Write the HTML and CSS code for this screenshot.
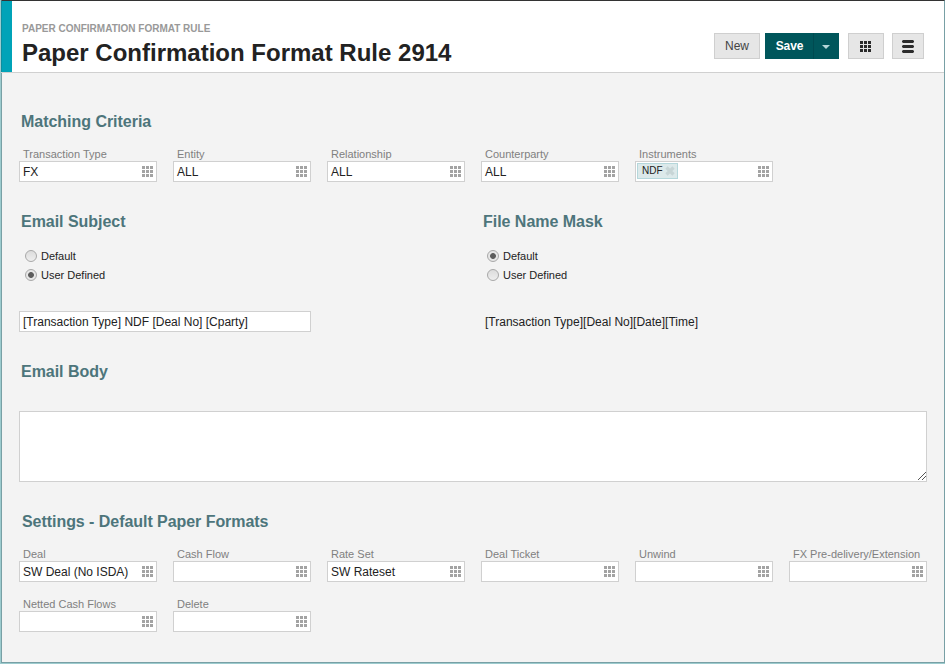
FILE: index.html
```
<!DOCTYPE html>
<html lang="en">
<head>
<meta charset="utf-8">
<title>Paper Confirmation Format Rule 2914</title>
<link rel="stylesheet" href="styles.css">
</head>
<body>
<svg width="0" height="0" class="defs">
  <symbol id="grid" viewBox="0 0 11 11"><path d="M0 0h3v3H0zM4 0h3v3H4zM8 0h3v3H8zM0 4h3v3H0zM4 4h3v3H4zM8 4h3v3H8zM0 8h3v3H0zM4 8h3v3H4zM8 8h3v3H8z"/></symbol>
</svg>
<div class="window">
  <header class="header">
    <div class="accent"></div>
    <div class="titles">
      <div class="crumb">PAPER CONFIRMATION FORMAT RULE</div>
      <h1>Paper Confirmation Format Rule 2914</h1>
    </div>
    <div class="actions">
      <button class="btn new">New</button>
      <div class="split"><button class="save">Save</button><button class="caret" aria-label="More"><svg width="8" height="4"><path d="M0 0h8L4 4z"/></svg></button></div>
      <button class="btn apps" aria-label="Apps"><svg width="11" height="11"><use href="#grid"/></svg></button>
      <button class="btn menu" aria-label="Menu"><svg width="12" height="13"><path d="M1 0h10l1 1v1l-1 1H1L0 2V1zM1 5h10l1 1v1l-1 1H1L0 7V6zM1 10h10l1 1v1l-1 1H1l-1-1v-1z"/></svg></button>
    </div>
  </header>
  <main>
    <section class="criteria">
      <h2>Matching Criteria</h2>
      <div class="fields">
        <div class="field"><label><span class="l1">Transaction Type</span></label><div class="box"><span>FX</span><svg><use href="#grid"/></svg></div></div>
        <div class="field"><label><span>Entity</span></label><div class="box"><span>ALL</span><svg><use href="#grid"/></svg></div></div>
        <div class="field"><label><span>Relationship</span></label><div class="box"><span>ALL</span><svg><use href="#grid"/></svg></div></div>
        <div class="field"><label><span>Counterparty</span></label><div class="box"><span>ALL</span><svg><use href="#grid"/></svg></div></div>
        <div class="field"><label><span>Instruments</span></label><div class="box tags"><span class="tag">NDF<svg class="x" viewBox="0 0 10 10"><path d="M1.5 1.5l7 7M8.5 1.5l-7 7"/></svg></span><svg><use href="#grid"/></svg></div></div>
      </div>
    </section>
    <div class="columns">
      <section>
        <h2>Email Subject</h2>
        <div class="radio"><i></i><span>Default</span></div>
        <div class="radio"><i class="on"></i><span>User Defined</span></div>
        <div class="box mask"><span>[Transaction Type] NDF [Deal No] [Cparty]</span></div>
      </section>
      <section>
        <h2>File Name Mask</h2>
        <div class="radio"><i class="on"></i><span>Default</span></div>
        <div class="radio"><i></i><span>User Defined</span></div>
        <div class="mask plain"><span>[Transaction Type][Deal No][Date][Time]</span></div>
      </section>
    </div>
    <section class="email">
      <h2>Email Body</h2>
      <div class="area"><svg width="8" height="8" shape-rendering="crispEdges"><path d="M0 7h1v1H0zM1 6h1v1H1zM2 5h1v1H2zM3 4h1v1H3zM4 3h1v1H4zM5 2h1v1H5zM6 1h1v1H6zM7 0h1v1H7zM4 7h1v1H4zM5 6h1v1H5zM6 5h1v1H6zM7 4h1v1H7z"/></svg></div>
    </section>
    <section class="settings">
      <h2>Settings - Default Paper Formats</h2>
      <div class="fields">
        <div class="field"><label><span>Deal</span></label><div class="box"><span>SW Deal (No ISDA)</span><svg><use href="#grid"/></svg></div></div>
        <div class="field"><label><span>Cash Flow</span></label><div class="box"><svg><use href="#grid"/></svg></div></div>
        <div class="field"><label><span>Rate Set</span></label><div class="box"><span>SW Rateset</span><svg><use href="#grid"/></svg></div></div>
        <div class="field"><label><span>Deal Ticket</span></label><div class="box"><svg><use href="#grid"/></svg></div></div>
        <div class="field"><label><span>Unwind</span></label><div class="box"><svg><use href="#grid"/></svg></div></div>
        <div class="field"><label><span>FX Pre-delivery/Extension</span></label><div class="box"><svg><use href="#grid"/></svg></div></div>
        <div class="field"><label><span>Netted Cash Flows</span></label><div class="box"><svg><use href="#grid"/></svg></div></div>
        <div class="field"><label><span>Delete</span></label><div class="box"><svg><use href="#grid"/></svg></div></div>
      </div>
    </section>
  </main>
</div>
</body>
</html>
```
FILE: styles.css
```
* { box-sizing: border-box; }
body { margin: 0; background: #9ccbce; font-family: "Liberation Sans", Arial, sans-serif; color: #222; overflow: hidden; }
.defs { display: block; }
.window { height: 663px; margin-left: 1px; border: 1px solid #78a0a5; border-top-color: #333; background: #f3f3f3; }
.header { display: flex; height: 72px; margin-left: -1px; background: #fff; border-bottom: 1px solid #d0d0d0; padding: 0 20px 0 0; }
.accent { width: 11px; margin-right: 10px; background: #00a3b8; border-left: 1px solid #0d8d9e; }
.crumb { margin-top: 22px; height: 12px; font-size: 10px; line-height: 12px; font-weight: bold; color: #999; white-space: nowrap; }
h1 { margin: 4px 0 0; font-size: 24px; line-height: 28px; font-weight: bold; color: #222; white-space: nowrap; }
.actions { display: flex; margin-left: auto; padding-top: 32px; height: 58px; }
button { margin: 0; padding: 0; border: 0; font-size: 12px; font-family: inherit; display: flex; align-items: center; justify-content: center; height: 26px; }
.btn { background: #e6e6e6; border: 1px solid #cfcfcf; color: #444; }
.new { width: 46px; margin-right: 5px; }
.split { display: flex; width: 74px; margin-right: 9px; background: #00565b; }
.save { width: 49px; padding-left: 1px; background: #00565b; color: #fff; font-weight: bold; letter-spacing: -0.1px; border-right: 1px solid #004a50; }
.caret { width: 25px; background: none; padding: 2px 1px 0 0; }
.caret svg { fill: #b4d6d8; }
.apps { width: 36px; margin-right: 8px; padding-right: 1px; }
.menu { width: 32px; }
.btn svg { fill: #2b2b2b; }
main { padding: 40px 17px 0; }
h2 { margin: 0; padding-left: 2px; font-size: 16px; line-height: 18px; font-weight: bold; color: #4d757b; white-space: nowrap; letter-spacing: -0.03px; }
.criteria { height: 100px; }
.fields { display: grid; grid-template-columns: repeat(6, 138px); column-gap: 16px; row-gap: 16px; padding-top: 17px; }
.field { height: 34px; }
label { display: block; height: 13px; padding-left: 4px; font-size: 11px; line-height: 13px; color: #808080; white-space: nowrap; }
.box { display: flex; align-items: center; height: 21px; padding: 0 3px; border: 1px solid #d0d0d0; background: #fff; font-size: 12px; line-height: 20px; white-space: nowrap; }
.box > svg { width: 11px; height: 11px; margin-left: auto; fill: #a3a3a3; }
.tags { padding-left: 1px; }
.tag { display: flex; align-items: center; width: 41px; height: 16px; margin-top: -1px; padding-left: 4px; border: 1px solid #b5d7db; background: #dce9ea; font-size: 10px; line-height: 14px; }
.x { width: 10px; height: 10px; margin-left: 2px; }
.x path { stroke: #c7d5d6; stroke-width: 3.2; fill: none; }
.columns { display: grid; grid-template-columns: 462px 1fr; height: 150px; }
.columns h2 { margin-bottom: 15px; }
.radio { display: flex; align-items: center; height: 19px; padding-left: 6px; font-size: 11px; }
.radio i { width: 12px; height: 12px; margin-right: 4px; border: 1px solid #a8a8a8; border-radius: 50%; background: linear-gradient(#dcdcdc, #eee); }
.radio .on { background: radial-gradient(circle, #5c5c5c 2.5px, #e6e6e6 3.3px); }
.mask { width: 292px; margin-top: 27px; font-size: 12px; }
.plain { padding-left: 4px; white-space: nowrap; line-height: 22px; }
.email { height: 150px; }
.area { display: flex; justify-content: flex-end; align-items: flex-end; height: 71px; margin-top: 30px; width: 908px; border: 1px solid #d0d0d0; background: #fff; padding-bottom: 1px; }
.area svg { fill: #555; }
.settings h2 { padding-left: 3px; letter-spacing: -0.05px; }
```
